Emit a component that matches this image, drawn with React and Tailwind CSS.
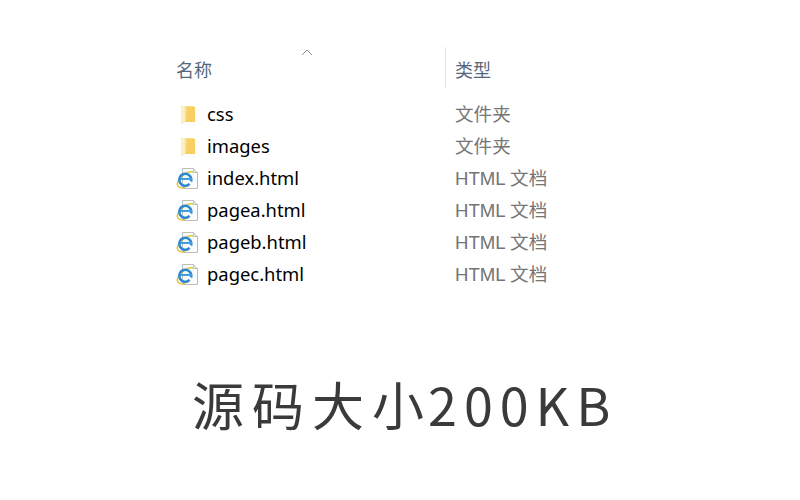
import React from "react";

const cjk = "font-['Noto_Sans_CJK_SC',sans-serif]";

const rows = [
  { name: "css", type: "文件夹", kind: "folder" },
  { name: "images", type: "文件夹", kind: "folder" },
  { name: "index.html", type: "HTML 文档", kind: "html" },
  { name: "pagea.html", type: "HTML 文档", kind: "html" },
  { name: "pageb.html", type: "HTML 文档", kind: "html" },
  { name: "pagec.html", type: "HTML 文档", kind: "html" },
];

function FolderIcon() {
  return (
    <svg width="22" height="22" viewBox="0 0 22 22">
      <path d="M5 2 L17 2 Q19 2 19 4 L19 18 L9 18 L5 20 Z" fill="#fbdc84" />
      <path d="M11 3 L19 3 L19 18 L10 18 Q12 10 11 3 Z" fill="#f7cf62" />
      <path d="M5 2 L9 2 L9 18 L5 20 Z" fill="#fdf0c0" />
    </svg>
  );
}

function HtmlIcon() {
  return (
    <svg width="22" height="22" viewBox="0 0 22 22">
      <path d="M6.5 0.5 H17.5 L21.5 4.5 V20.5 H6.5 Z" fill="#fbfbfb" stroke="#b9bcc0" />
      <path d="M17.5 0.5 V4.5 H21.5" fill="#e6e8ea" stroke="#b9bcc0" />
      <path d="M2 18 C-1 13 10 2 17 4" fill="none" stroke="#e6c445" strokeWidth="1.6" />
      <path d="M2 18 C4 21 9 20 14 16" fill="none" stroke="#e6c445" strokeWidth="1.6" />
      <path d="M15 13.5 A6 6 0 1 0 13.5 16" fill="none" stroke="#2a8ad6" strokeWidth="2.6" />
      <path d="M4.5 11 H16" stroke="#3f9ee6" strokeWidth="2" />
    </svg>
  );
}

export default function App() {
  return (
    <div className={`flex h-[500px] w-[800px] flex-col overflow-hidden bg-white ${cjk}`}>
      {/* Header */}
      <div className="ml-[176px] mt-[47px] flex h-[41px] font-['Noto_Sans','Noto_Sans_CJK_SC',sans-serif]">
        <div className="relative w-[269px] pt-[10px] text-[18px] leading-[26px] text-[#56677c]">
          名称
          <svg className="absolute left-[125px] top-[2px]" width="12" height="7" viewBox="0 0 12 7">
            <path d="M1 6 L6 1 L11 6" fill="none" stroke="#8a8f96" />
          </svg>
        </div>
        <div className="w-px bg-[#e5e5e5]" />
        <div className="pl-[9px] pt-[10px] text-[18px] leading-[26px] text-[#56677c]">类型</div>
      </div>

      {/* Files */}
      <div className="ml-[176px] mt-[11px] flex flex-col">
        {rows.map((row) => (
          <div key={row.name} className="flex h-[32px] items-center">
            <div className="flex w-[31px] items-center">
              {row.kind === "folder" ? <FolderIcon /> : <HtmlIcon />}
            </div>
            <div className="w-[248px] pb-[2px] font-['Noto_Sans',sans-serif] text-[18.4px] leading-[30px] text-black">{row.name}</div>
            <div className="font-['Liberation_Sans','Noto_Sans_CJK_SC',sans-serif] text-[18.6px] leading-[32px] text-[#757575]">{row.type}</div>
          </div>
        ))}
      </div>

      {/* Caption */}
      <div className="mt-[73px] pl-[192px] text-[52px] leading-[80px] tracking-[8px] text-[#3a3a3a]">
        源码大小<span className="ml-[-4px] tracking-[7px]">200KB</span>
      </div>
    </div>
  );
}
